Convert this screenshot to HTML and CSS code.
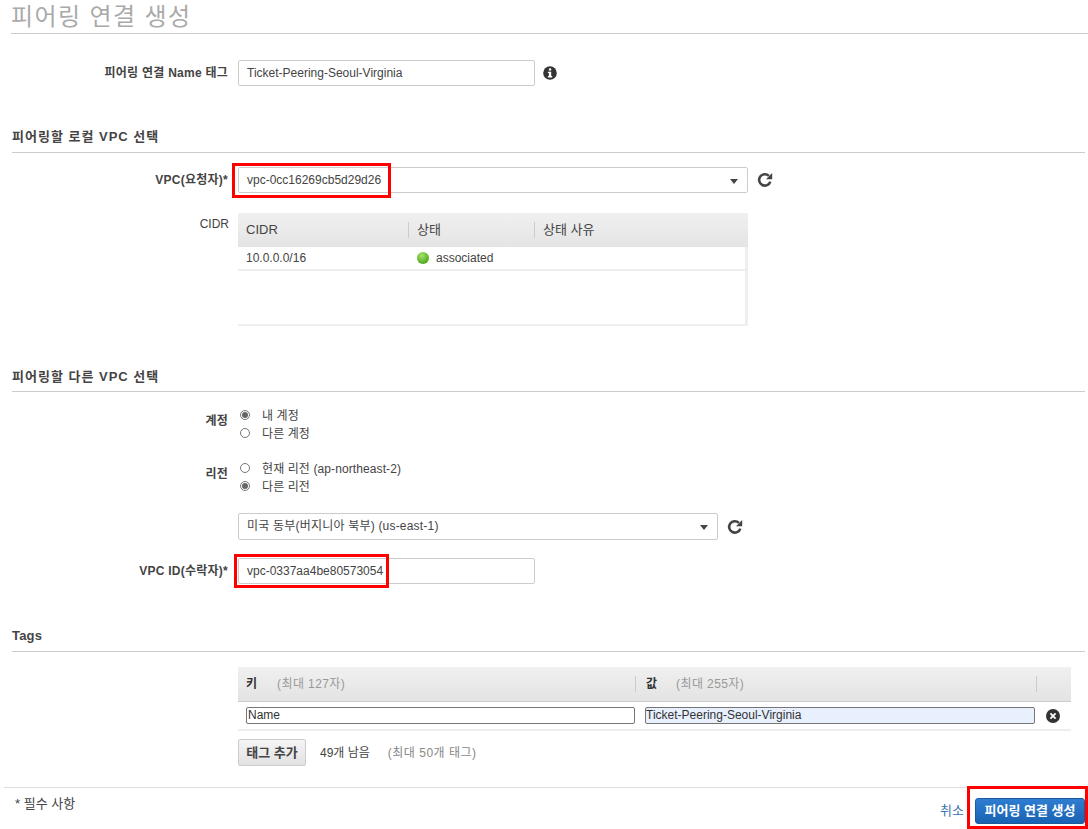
FILE: index.html
```html
<!DOCTYPE html>
<html lang="ko">
<head>
<meta charset="utf-8">
<title>피어링 연결 생성</title>
<link rel="stylesheet" href="styles.css">
</head>
<body>
<svg class="defs" width="0" height="0" aria-hidden="true">
  <symbol id="refresh" viewBox="0 0 16 16">
    <path d="M13.3 9.6A5.7 5.7 0 1 1 11.9 3.9" fill="none" stroke="#444" stroke-width="2.6"/>
    <path d="M15.2 1V7.2H9z" fill="#444"/>
  </symbol>
</svg>
<main class="page">
  <h1 class="title">피어링 연결 생성</h1>

  <div class="row row-name">
    <label class="label strong">피어링 연결 Name 태그</label>
    <div class="field">
      <div class="input w297">Ticket-Peering-Seoul-Virginia</div>
      <svg class="info" viewBox="0 0 14 14" width="14" height="14"><circle cx="7" cy="7" r="6.8" fill="#333"/><rect x="5.9" y="2.4" width="2.3" height="2.2" fill="#fff"/><path d="M4.9 5.7h3.3v4.3h1v1.4H4.9V10h1V7.1h-1z" fill="#fff"/></svg>
    </div>
  </div>

  <h2 class="section s-local">피어링할 로컬 VPC 선택</h2>
  <div class="row row-vpc">
    <label class="label strong">VPC(요청자)*</label>
    <div class="field">
      <div class="select w510"><span>vpc-0cc16269cb5d29d26</span><i class="caret"></i><b class="mark mark-vpc"></b></div>
      <svg class="refresh"><use href="#refresh"/></svg>
    </div>
  </div>
  <div class="row row-cidr">
    <label class="label">CIDR</label>
    <div class="cidr">
      <div class="thead cidr-cols">
        <span>CIDR</span><span class="sep">상태</span><span class="sep">상태 사유</span>
      </div>
      <div class="tbody">
        <div class="tr cidr-cols">
          <span>10.0.0.0/16</span>
          <span class="status"><i class="dot"></i>associated</span>
          <span></span>
        </div>
      </div>
    </div>
  </div>

  <h2 class="section s-other">피어링할 다른 VPC 선택</h2>
  <div class="row row-account">
    <label class="label strong lab-radio">계정</label>
    <div class="radios">
      <div class="radio"><i class="rb on"></i>내 계정</div>
      <div class="radio"><i class="rb"></i>다른 계정</div>
    </div>
  </div>
  <div class="row row-region">
    <label class="label strong lab-radio">리전</label>
    <div class="radios">
      <div class="radio"><i class="rb"></i>현재 리전 (ap-northeast-2)</div>
      <div class="radio"><i class="rb on"></i>다른 리전</div>
    </div>
  </div>
  <div class="row row-regsel">
    <span></span>
    <div class="field">
      <div class="select w480"><span class="wide">미국 동부(버지니아 북부) (us-east-1)</span><i class="caret"></i></div>
      <svg class="refresh"><use href="#refresh"/></svg>
    </div>
  </div>
  <div class="row row-peer">
    <label class="label strong">VPC ID(수락자)*</label>
    <div class="field">
      <div class="input w297">vpc-0337aa4be80573054<b class="mark mark-peer"></b></div>
    </div>
  </div>

  <h2 class="section s-tags">Tags</h2>
  <div class="tags">
    <div class="tags-head tag-cols">
      <span><b>키</b><em>(최대 127자)</em></span>
      <span class="sep"><b>값</b><em>(최대 255자)</em></span>
      <span class="sep"></span>
    </div>
    <div class="tags-row tag-cols">
      <div class="cell"><div class="tag-input">Name</div></div>
      <div class="cell"><div class="tag-input filled">Ticket-Peering-Seoul-Virginia</div></div>
      <svg class="remove" viewBox="0 0 14 14" width="14" height="14"><circle cx="7" cy="7" r="7" fill="#333"/><path d="M4.4 4.4l5.2 5.2M9.6 4.4l-5.2 5.2" stroke="#fff" stroke-width="1.8"/></svg>
    </div>
    <div class="tags-actions">
      <button class="btn" type="button">태그 추가</button>
      <span class="left">49개 남음</span>
      <span class="muted">(최대 50개 태그)</span>
    </div>
  </div>

  <footer class="footer">
    <span class="req">* 필수 사항</span>
    <div class="actions">
      <a class="cancel">취소</a>
      <button class="primary" type="button">피어링 연결 생성</button>
      <b class="mark mark-btn"></b>
    </div>
  </footer>
</main>
</body>
</html>
```
FILE: styles.css
```css
* { box-sizing: border-box; }
html, body { margin: 0; padding: 0; background: #fff; }
body {
  font: 12px/16px "Liberation Sans", "Noto Sans CJK KR", sans-serif;
  color: #444;
  height: 829px;
  overflow: hidden;
}
.defs { position: absolute; }
.page { display: flex; flex-direction: column; }

.title {
  margin: 0 0 0 11px;
  height: 34px;
  font-size: 24px;
  line-height: 33px;
  font-weight: 400;
  color: #aaa;
  letter-spacing: 1.4px;
  border-bottom: 1px solid #ccc;
}
.section {
  margin: 0 3px 0 12px;
  font-size: 13px;
  line-height: 18px;
  font-weight: 700;
  letter-spacing: 1px;
  color: #444;
  border-bottom: 1px solid #ccc;
}
.s-local { margin-top: 42px; height: 25px; }
.s-other { margin-top: 42px; height: 24px; }
.s-tags { margin-top: 43px; height: 25px; letter-spacing: 0.2px; }

.row {
  display: grid;
  grid-template-columns: 228px 1fr;
  column-gap: 10px;
}
.label { text-align: right; line-height: 16px; color: #444; }
.strong { font-weight: 700; letter-spacing: 0.25px; }
.field { display: flex; align-items: center; }

.row-name { margin-top: 26px; align-items: center; }
.row-vpc { margin-top: 14px; align-items: center; }
.row-cidr { margin-top: 20px; }
.row-cidr .label { padding-top: 3px; margin-right: -1px; }
.row-account { margin-top: 16px; }
.row-region { margin-top: 19px; }
.row-regsel { margin-top: 18px; }
.row-peer { margin-top: 18px; align-items: center; }

.input, .select {
  position: relative;
  height: 26px;
  border: 1px solid #ccc;
  border-radius: 2px;
  line-height: 24px;
  padding-left: 8px;
  background: #fff;
  color: #444;
}
.select { height: 27px; line-height: 25px; }
.row-vpc .select { height: 26px; line-height: 24px; }
.wide { letter-spacing: 0.2px; }
.w297 { width: 297px; }
.w510 { width: 510px; }
.w480 { width: 480px; }
.caret {
  position: absolute;
  right: 9px;
  top: 11px;
  border: 4px solid transparent;
  border-top: 5px solid #444;
  border-bottom: 0;
}
.info { margin-left: 8px; }
.refresh { width: 16px; height: 16px; margin-left: 9px; }

.mark { position: absolute; border: 3px solid #f00; pointer-events: none; }
.mark-vpc { left: -7px; top: -5px; width: 159px; height: 35px; }
.mark-peer { left: -5px; top: -5px; width: 155px; height: 34px; }
.mark-btn { right: -3px; top: -12px; width: 121px; height: 43px; }

.cidr {
  width: 510px;
  height: 113px;
  display: flex;
  flex-direction: column;
  border-bottom: 2px solid #eee;
}
.cidr-cols { display: grid; grid-template-columns: 170px 126px 1fr; }
.thead {
  height: 34px;
  align-items: center;
  font-size: 13px;
  background: linear-gradient(#f0f0f0, #e4e4e4);
  color: #444;
}
.thead span { padding-left: 8px; line-height: 16px; }
.thead .sep { border-left: 1px solid #ccc; }
.tbody { flex: 1; border-right: 3px solid #eee; }
.tr {
  height: 24px;
  align-items: center;
  border-bottom: 2px solid #eee;
}
.tr > span { padding-left: 8px; }
.status { display: flex; align-items: center; }
.dot {
  width: 12px;
  height: 12px;
  margin: 0 7px 0 1px;
  border-radius: 50%;
  background: radial-gradient(circle at 40% 30%, #a5e36a, #4ea71c 75%);
}

.radios { display: flex; flex-direction: column; row-gap: 2px; letter-spacing: 0.1px; }
.radio { display: flex; align-items: center; height: 16px; }
.rb {
  position: relative;
  width: 10px;
  height: 10px;
  margin: 0 12px 2px 2px;
  border: 1px solid #777;
  border-radius: 50%;
  background: #fff;
}
.rb.on::after {
  content: "";
  position: absolute;
  left: 1px;
  top: 1px;
  width: 6px;
  height: 6px;
  border-radius: 50%;
  background: #666;
}
.lab-radio { padding-top: 5px; }

.tags { margin: 15px 17px 0 238px; }
.tag-cols { display: grid; grid-template-columns: 397px 401px 1fr; }
.tags-head {
  height: 35px;
  align-items: center;
  background: linear-gradient(#f0f0f0, #e3e3e3);
  border-bottom: 1px solid #ccc;
}
.tags-head > span { padding-left: 8px; height: 16px; line-height: 16px; }
.tags-head .sep { border-left: 1px solid #ccc; padding-left: 10px; }
.tags-head b { color: #333; }
.tags-head em { font-style: normal; color: #999; margin-left: 20px; letter-spacing: 0.4px; }
.tags-head .sep em { margin-left: 19px; }
.tags-row {
  height: 29px;
  align-items: center;
  border-bottom: 2px solid #eee;
}
.cell { padding-left: 8px; }
.cell + .cell { padding-left: 10px; padding-right: 9px; }
.tag-input {
  width: 389px;
  height: 17px;
  line-height: 15px;
  padding-left: 1px;
  border: 1px solid #767676;
  border-radius: 2px;
  color: #333;
  background: #fff;
}
.filled { width: 390px; padding-left: 0; background: #e8f0fe; }
.remove { margin-left: 10px; }
.tags-actions { display: flex; align-items: center; margin-top: 8px; }
.btn {
  width: 68px;
  height: 27px;
  padding: 0;
  font: 700 13px/16px "Liberation Sans", "Noto Sans CJK KR", sans-serif;
  color: #444;
  border: 1px solid #ccc;
  border-radius: 2px;
  background: linear-gradient(#f5f5f5, #e2e2e2);
}
.left { margin-left: 14px; }
.muted { margin-left: 18px; color: #888; letter-spacing: 0.5px; }

.footer {
  margin: 21px 0 0 4px;
  height: 42px;
  display: flex;
  justify-content: space-between;
  border-top: 1px solid #ddd;
}
.req { margin-left: 11px; padding-top: 8px; font-size: 13px; color: #444; }
.actions { position: relative; display: flex; align-items: center; margin-top: 10px; margin-right: 3px; height: 26px; }
.cancel { color: #3b73af; margin-right: 11px; font-size: 13px; }
.primary {
  width: 110px;
  height: 26px;
  padding: 0;
  font: 700 13px/16px "Liberation Sans", "Noto Sans CJK KR", sans-serif;
  color: #fff;
  border: 1px solid #1b5a9c;
  border-radius: 3px;
  background: linear-gradient(#2f7dd1, #1a63b3);
}
```
